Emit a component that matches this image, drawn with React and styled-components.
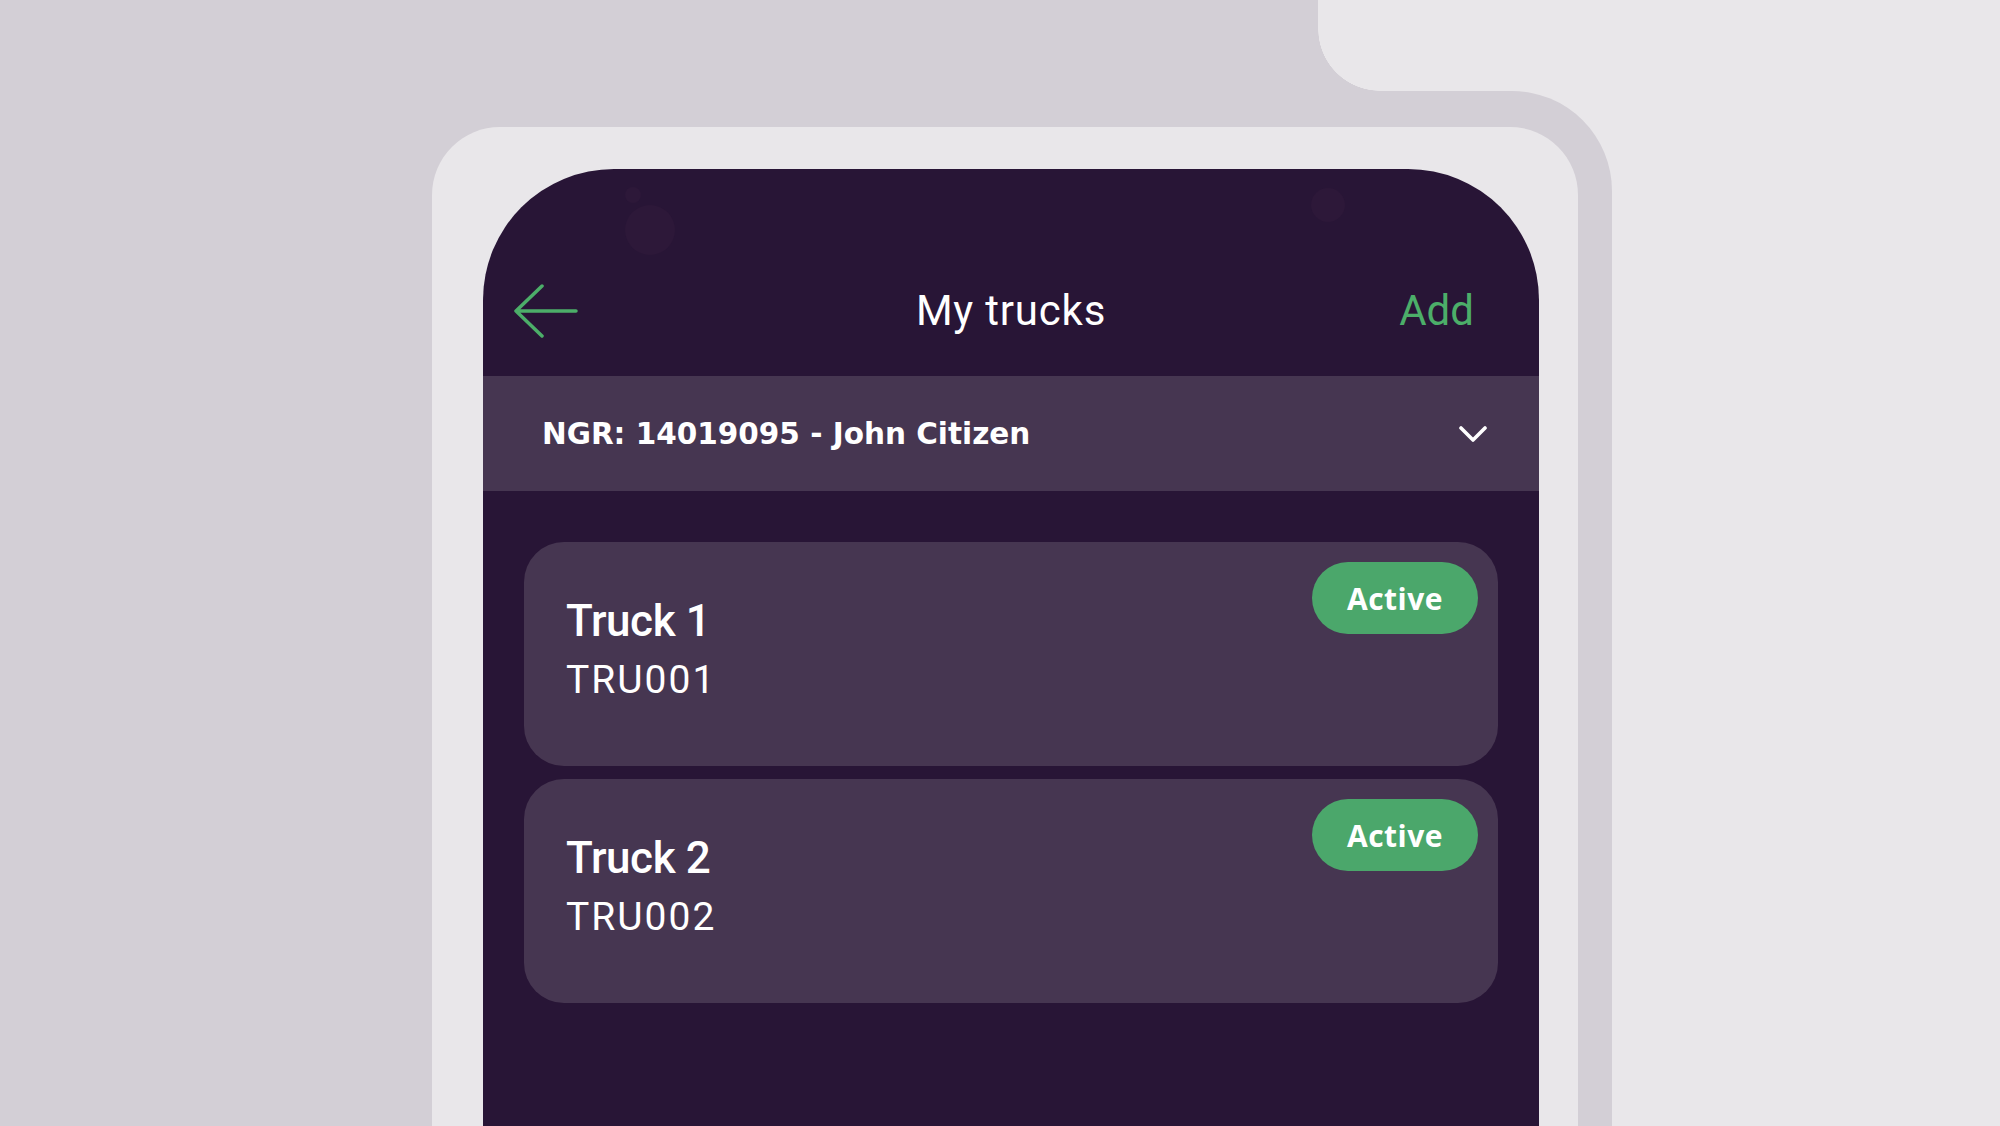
import React from 'react';
import styled, { createGlobalStyle } from 'styled-components';

const GlobalStyle = createGlobalStyle`
  html, body { margin: 0; padding: 0; }
  body {
    background: #e9e7ea;
    font-family: Roboto, "Liberation Sans", sans-serif;
    overflow: hidden;
  }
`;

const Page = styled.main`
  height: 1126px;
  box-sizing: border-box;
  padding-top: 91px;
  overflow: hidden;
  background:
    radial-gradient(circle at 100% 0, transparent 61.5px, #d3cfd6 62px) 1318px 29px / 62px 62px no-repeat,
    linear-gradient(#d3cfd6, #d3cfd6) 0 0 / 1318px 100% no-repeat,
    #e9e7ea;
`;

const Backdrop = styled.div`
  width: 1612px;
  height: 100%;
  box-sizing: border-box;
  padding: 36px 34px 0 432px;
  background: #d3cfd6;
  border-top-right-radius: 100px;
`;

const Device = styled.div`
  height: 100%;
  box-sizing: border-box;
  padding: 42px 39px 0 51px;
  background: #e9e7ea;
  border-radius: 68px 68px 0 0;
`;

const Screen = styled.div`
  position: relative;
  height: 100%;
  background: #281536;
  border-radius: 131px 131px 0 0;
  overflow: hidden;
  color: #fff;
`;

const Lens = styled.span`
  position: absolute;
  border-radius: 50%;
  background: #2d1839;
  width: ${(p) => p.size}px;
  height: ${(p) => p.size}px;
  left: ${(p) => p.x}px;
  top: ${(p) => p.y}px;
`;

const Header = styled.header`
  display: grid;
  grid-template-columns: 1fr auto 1fr;
  align-items: center;
  height: 62px;
  padding: 111px 30px 34px;
`;

const BackButton = styled.button`
  justify-self: start;
  display: flex;
  padding: 0;
  border: 0;
  background: none;
  cursor: pointer;
`;

const Title = styled.h1`
  margin: 0;
  font-family: Roboto, sans-serif;
  font-weight: 400;
  font-size: 42px;
  line-height: 62px;
  letter-spacing: 0.8px;
  color: #fff;
`;

const AddLink = styled.button`
  justify-self: end;
  margin-right: 35px;
  padding: 0;
  border: 0;
  background: none;
  font-family: Roboto, sans-serif;
  font-size: 42px;
  line-height: 62px;
  color: #4cae69;
  cursor: pointer;
`;

const AccountBar = styled.div`
  display: flex;
  align-items: center;
  justify-content: space-between;
  height: 115px;
  padding: 0 52px 0 59px;
  background: #463651;
`;

const AccountName = styled.span`
  font-family: "DejaVu Sans", sans-serif;
  font-weight: 700;
  font-size: 29.5px;
  color: #fff;
`;

const List = styled.section`
  display: flex;
  flex-direction: column;
  gap: 13px;
  padding: 51px 41px 0;
`;

const Card = styled.article`
  display: flex;
  justify-content: space-between;
  align-items: flex-start;
  height: 224px;
  box-sizing: border-box;
  padding: 20px 20px 0 42px;
  background: #463651;
  border-radius: 40px;
`;

const CardText = styled.div`
  display: flex;
  flex-direction: column;
  margin-top: 33px;
`;

const CardTitle = styled.div`
  font-family: Roboto, sans-serif;
  font-weight: 500;
  font-size: 44px;
  line-height: 52px;
  letter-spacing: -0.4px;
`;

const CardCode = styled.div`
  margin-top: 10px;
  font-family: Roboto, sans-serif;
  font-size: 39px;
  line-height: 46px;
  letter-spacing: 2px;
`;

const Badge = styled.span`
  display: flex;
  align-items: center;
  justify-content: center;
  width: 166px;
  height: 72px;
  border-radius: 36px;
  background: #4ba76b;
  font-family: "Open Sans", sans-serif;
  font-weight: 700;
  font-size: 30px;
  letter-spacing: 0.5px;
  color: #fff;
`;

const trucks = [
  { id: 1, name: 'Truck 1', code: 'TRU001', status: 'Active' },
  { id: 2, name: 'Truck 2', code: 'TRU002', status: 'Active' },
];

const BackArrow = () => (
  <svg width="66" height="54" viewBox="0 0 66 54" fill="none">
    <path d="M3 27H63M29 2L3 27L29 52" stroke="#4cae69" strokeWidth="3.5" strokeLinecap="round" strokeLinejoin="round" />
  </svg>
);

const Chevron = () => (
  <svg width="28" height="18" viewBox="0 0 28 18" fill="none">
    <path d="M2 3L14 15L26 3" stroke="#fff" strokeWidth="3.6" strokeLinecap="round" strokeLinejoin="round" />
  </svg>
);

export default function App() {
  return (
    <>
      <GlobalStyle />
      <Page>
        <Backdrop>
          <Device>
            <Screen>
              <Lens x={142} y={18} size={16} />
              <Lens x={142} y={36} size={50} />
              <Lens x={828} y={19} size={34} />
              <Header>
                <BackButton aria-label="Back">
                  <BackArrow />
                </BackButton>
                <Title>My trucks</Title>
                <AddLink>Add</AddLink>
              </Header>
              <AccountBar>
                <AccountName>NGR: 14019095 - John Citizen</AccountName>
                <Chevron />
              </AccountBar>
              <List>
                {trucks.map((t) => (
                  <Card key={t.id}>
                    <CardText>
                      <CardTitle>{t.name}</CardTitle>
                      <CardCode>{t.code}</CardCode>
                    </CardText>
                    <Badge>{t.status}</Badge>
                  </Card>
                ))}
              </List>
            </Screen>
          </Device>
        </Backdrop>
      </Page>
    </>
  );
}
